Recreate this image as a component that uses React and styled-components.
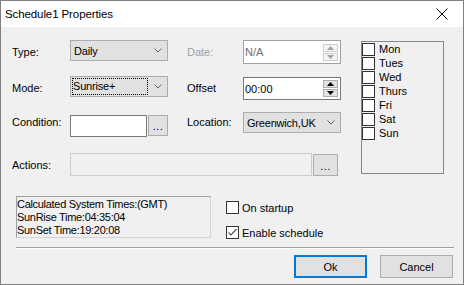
import React from "react";
import styled, { createGlobalStyle } from "styled-components";

const Global = createGlobalStyle`
  * { box-sizing: border-box; }
  html, body { margin: 0; padding: 0; background: #f0f0f0; }
  body {
    font-family: "Liberation Sans", Arial, sans-serif;
    font-size: 11px;
    color: #000;
  }
`;

const Window = styled.div`
  width: 464px;
  height: 285px;
  border: 1px solid #808080;
  background: #f0f0f0;
  display: flex;
  flex-direction: column;
`;

const TitleBar = styled.div`
  height: 26px;
  background: #fff;
  display: flex;
  align-items: center;
  justify-content: space-between;
  padding-left: 4px;
  font-size: 11.5px;
  letter-spacing: -0.1px;
  flex-shrink: 0;
`;

const CloseBtn = styled.div`
  width: 46px;
  height: 26px;
  display: flex;
  align-items: center;
  justify-content: center;
  padding-left: 4px;
`;

const Body = styled.div`
  flex: 1;
  padding: 13px 10px 0 11px;
  display: flex;
  flex-direction: column;
`;

const Top = styled.div`
  display: flex;
`;

const LeftCol = styled.div`
  display: flex;
  flex-direction: column;
`;

const FormGrid = styled.div`
  display: grid;
  grid-template-columns: 58px 98px 19px 56px 98px;
  grid-template-rows: 23px 23px 25px;
  row-gap: 13px;
  align-items: start;
`;

const Label = styled.div`
  grid-column: ${(p) => p.col};
  align-self: ${(p) => (p.top ? "start" : "center")};
  padding-top: ${(p) => (p.top ? "4px" : "0")};
  color: ${(p) => (p.disabled ? "#a0a0a0" : "#000")};
  white-space: nowrap;
`;

const Select = styled.div`
  height: ${(p) => p.h || 21}px;
  margin-top: ${(p) => p.mt || 0}px;
  border: 1px solid #adadad;
  background: #e1e1e1;
  display: flex;
  align-items: center;
  justify-content: space-between;
  padding: 0 5px 0 3px;
  letter-spacing: -0.2px;
`;

const FocusText = styled.span`
  outline: 1px dotted #000;
  outline-offset: 0;
  width: 74px;
  height: 15px;
  line-height: 15px;
  margin-left: -1px;
`;

const SpinBox = styled.div`
  height: ${(p) => p.h || 23}px;
  margin-top: ${(p) => p.mt || 0}px;
  border: 1px solid ${(p) => (p.disabled ? "#a0a0a0" : "#7a7a7a")};
  background: #fff;
  display: flex;
  align-items: center;
  justify-content: space-between;
  padding: 0 2px 0 1px;
  color: ${(p) => (p.disabled ? "#6d6d6d" : "#000")};
`;

const SpinCol = styled.div`
  width: 15px;
  height: 17px;
  display: flex;
  flex-direction: column;
  gap: 1px;
`;

const SpinBtn = styled.div`
  flex: 1;
  border: 1px solid ${(p) => (p.disabled ? "#cccccc" : "#adadad")};
  background: ${(p) => (p.disabled ? "#f4f4f4" : "#e1e1e1")};
  display: flex;
  align-items: center;
  justify-content: center;
`;

const ConditionWrap = styled.div`
  display: flex;
  margin-top: 3px;
  gap: 1px;
`;

const TextInput = styled.div`
  width: ${(p) => p.w}px;
  height: ${(p) => p.h}px;
  border: 1px solid ${(p) => (p.disabled ? "#cccccc" : "#7a7a7a")};
  background: ${(p) => (p.disabled ? "#f0f0f0" : "#fff")};
`;

const DotsBtn = styled.div`
  width: ${(p) => p.w}px;
  height: ${(p) => p.h}px;
  border: 1px solid #adadad;
  background: #e1e1e1;
  display: flex;
  align-items: flex-end;
  justify-content: center;
  padding-bottom: 5px;
  font-size: 11px;
  line-height: 8px;
  letter-spacing: 0.5px;
`;

const ActionsRow = styled.div`
  display: flex;
  align-items: center;
  margin-top: 16px;
  gap: 1px;
`;

const ActionsLabel = styled.div`
  width: 57px;
  margin-top: 1px;
`;

const DaysBox = styled.div`
  width: 83px;
  height: 133px;
  margin-left: 20px;
  margin-top: 1px;
  border: 1px solid #828790;
  display: flex;
  flex-direction: column;
`;

const DayItem = styled.div`
  height: 14px;
  display: flex;
  align-items: center;
  gap: 4px;
`;

const Box = styled.div`
  width: 13px;
  height: 13px;
  border: 1px solid #333;
  background: #fff;
  flex-shrink: 0;
  display: flex;
  align-items: center;
  justify-content: center;
`;

const Bottom = styled.div`
  display: flex;
  align-items: flex-start;
  margin-top: 20px;
  padding-left: 4px;
`;

const TimesBox = styled.div`
  width: 195px;
  height: 42px;
  border: 1px solid #d4d4d4;
  border-top-color: #a0a0a0;
  border-left-color: #a0a0a0;
  padding: 1px 0 0 0;
  line-height: 13px;
  letter-spacing: -0.3px;
`;

const Options = styled.div`
  display: flex;
  flex-direction: column;
  gap: 12px;
  margin-left: 15px;
  padding-top: 5px;
`;

const Option = styled.div`
  display: flex;
  align-items: center;
  gap: 3px;
`;

const Separator = styled.div`
  margin: 8px 0 0 4px;
  height: 1px;
  width: 438px;
  background: #a0a0a0;
  box-shadow: 0 1px 0 #fff;
`;

const ButtonRow = styled.div`
  display: flex;
  justify-content: flex-end;
  gap: 13px;
  margin-top: 7px;
`;

const Button = styled.div`
  width: 73px;
  height: 23px;
  border: ${(p) => (p.primary ? "2px solid #0078d7" : "1px solid #adadad")};
  background: #e1e1e1;
  display: flex;
  align-items: center;
  justify-content: center;
`;

const Chevron = () => (
  <svg width="8" height="5" viewBox="0 0 8 5">
    <polyline points="0.5,0.5 4,4 7.5,0.5" fill="none" stroke="#606060" strokeWidth="1" />
  </svg>
);

const Tri = ({ up, disabled }) => (
  <svg width="7" height="4" viewBox="0 0 7 4">
    <polygon
      points={up ? "3.5,0 7,4 0,4" : "0,0 7,0 3.5,4"}
      fill={disabled ? "#a0a0a0" : "#000"}
    />
  </svg>
);

const Spin = ({ disabled }) => (
  <SpinCol>
    <SpinBtn disabled={disabled}>
      <Tri up disabled={disabled} />
    </SpinBtn>
    <SpinBtn disabled={disabled}>
      <Tri disabled={disabled} />
    </SpinBtn>
  </SpinCol>
);

const Check = () => (
  <svg width="11" height="11" viewBox="0 0 11 11">
    <polyline points="1.5,5.5 4,8 9.5,2" fill="none" stroke="#555" strokeWidth="1.2" />
  </svg>
);

const days = ["Mon", "Tues", "Wed", "Thurs", "Fri", "Sat", "Sun"];

export default function App() {
  return (
    <>
      <Global />
      <Window>
        <TitleBar>
          <span>Schedule1 Properties</span>
          <CloseBtn>
            <svg width="12" height="12" viewBox="0 0 12 12">
              <path d="M0.5 0.5 L11.5 11.5 M11.5 0.5 L0.5 11.5" stroke="#000" strokeWidth="1" />
            </svg>
          </CloseBtn>
        </TitleBar>
        <Body>
          <Top>
            <LeftCol>
              <FormGrid>
                <Label col={1}>Type:</Label>
                <Select>
                  <span>Daily</span>
                  <Chevron />
                </Select>
                <Label col={4} disabled>Date:</Label>
                <SpinBox disabled h={24}>
                  <span>N/A</span>
                  <Spin disabled />
                </SpinBox>

                <Label col={1}>Mode:</Label>
                <Select>
                  <FocusText>Sunrise+</FocusText>
                  <Chevron />
                </Select>
                <Label col={4}>Offset</Label>
                <SpinBox mt={1}>
                  <span>00:00</span>
                  <Spin />
                </SpinBox>

                <Label col={1} top>Condition:</Label>
                <ConditionWrap>
                  <TextInput w={77} h={22} />
                  <DotsBtn w={20} h={21}>...</DotsBtn>
                </ConditionWrap>
                <Label col={4} top>Location:</Label>
                <Select h={21}>
                  <span>Greenwich,UK</span>
                  <Chevron />
                </Select>
              </FormGrid>
              <ActionsRow>
                <ActionsLabel>Actions:</ActionsLabel>
                <TextInput w={242} h={23} disabled />
                <DotsBtn w={25} h={22}>...</DotsBtn>
              </ActionsRow>
            </LeftCol>
            <DaysBox>
              {days.map((d) => (
                <DayItem key={d}>
                  <Box />
                  <span>{d}</span>
                </DayItem>
              ))}
            </DaysBox>
          </Top>
          <Bottom>
            <TimesBox>
              <div>Calculated System Times:(GMT)</div>
              <div>SunRise Time:04:35:04</div>
              <div>SunSet Time:19:20:08</div>
            </TimesBox>
            <Options>
              <Option>
                <Box />
                <span>On startup</span>
              </Option>
              <Option>
                <Box>
                  <Check />
                </Box>
                <span>Enable schedule</span>
              </Option>
            </Options>
          </Bottom>
          <Separator />
          <ButtonRow>
            <Button primary>Ok</Button>
            <Button>Cancel</Button>
          </ButtonRow>
        </Body>
      </Window>
    </>
  );
}
